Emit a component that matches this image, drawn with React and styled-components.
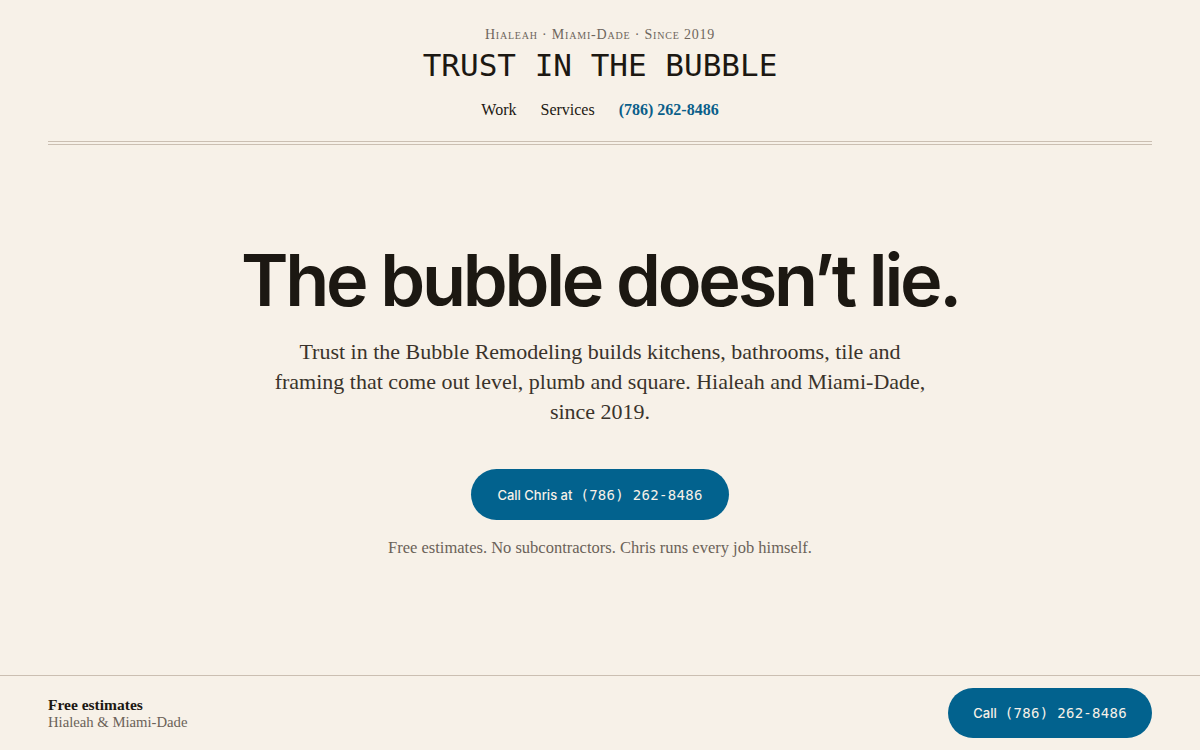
import React from "react";
import styled, { createGlobalStyle } from "styled-components";

const GlobalStyles = createGlobalStyle`
  html, body {
    margin: 0;
    padding: 0;
    background: #f7f1e8;
  }
  #root {
    min-height: 100vh;
  }
`;

const Page = styled.div`
  min-height: 100vh;
  display: flex;
  flex-direction: column;
  background: #f7f1e8;
  color: #1c1812;
  font-family: "Liberation Serif", "Times New Roman", serif;
`;

const Header = styled.header`
  margin: 0 48px;
  padding-top: 26px;
  display: flex;
  flex-direction: column;
  align-items: center;
  border-bottom: 4px double #cbbfb2;
  padding-bottom: 20px;
`;

const Eyebrow = styled.div`
  font-size: 14px;
  font-variant: small-caps;
  letter-spacing: 0.8px;
  color: #6e665c;
  line-height: 18px;
`;

const Brand = styled.div`
  font-family: "DejaVu Sans Mono", "Liberation Mono", monospace;
  font-size: 31px;
  font-weight: 500;
  line-height: 38px;
  margin-top: 2px;
  color: #1c1812;
`;

const Nav = styled.nav`
  display: flex;
  gap: 24px;
  margin-top: 15px;
  font-size: 16px;
  line-height: 22px;
`;

const NavLink = styled.a`
  color: ${(p) => (p.$accent ? "#0b5f8a" : "#1c1812")};
  font-weight: ${(p) => (p.$accent ? 700 : 400)};
  text-decoration: none;
`;

const Hero = styled.main`
  flex: 1;
  display: flex;
  flex-direction: column;
  align-items: center;
  padding-top: 93px;
  text-align: center;
`;

const Headline = styled.h1`
  margin: 0;
  font-family: Inter, "Liberation Sans", sans-serif;
  font-weight: 600;
  font-size: 72px;
  letter-spacing: -0.045em;
  line-height: 84px;
  color: #1c1812;
`;

const Lead = styled.p`
  margin: 15px 0 0;
  max-width: 668px;
  font-size: 22px;
  line-height: 30px;
  color: #3a332b;
`;

const CallButton = styled.a`
  display: inline-flex;
  align-items: center;
  justify-content: center;
  gap: 8px;
  height: ${(p) => p.$h || 51}px;
  padding: 0 ${(p) => p.$px || 26}px;
  border-radius: 999px;
  background: #02628e;
  color: #f7f1e8;
  text-decoration: none;
  font-family: Inter, "Liberation Sans", sans-serif;
  font-weight: 500;
  font-size: 13px;
  box-sizing: border-box;
`;

const Mono = styled.span`
  font-family: "DejaVu Sans Mono", "Liberation Mono", monospace;
  font-size: 14px;
  font-weight: 500;
  letter-spacing: 0.3px;
`;

const HeroButton = styled(CallButton)`
  margin-top: 42px;
`;

const Note = styled.p`
  margin: 18px 0 0;
  font-size: 16.5px;
  color: #6b6258;
`;

const Footer = styled.footer`
  border-top: 1px solid #cbbfb2;
  height: 74px;
  padding: 0 48px;
  display: flex;
  align-items: center;
  justify-content: space-between;
`;

const FooterText = styled.div`
  display: flex;
  flex-direction: column;
`;

const FooterTitle = styled.div`
  font-size: 15.5px;
  font-weight: 700;
  line-height: 18px;
`;

const FooterSub = styled.div`
  font-size: 14.7px;
  line-height: 17px;
  color: #6b6258;
`;

export default function App() {
  return (
    <Page>
      <GlobalStyles />
      <Header>
        <Eyebrow>Hialeah · Miami-Dade · Since 2019</Eyebrow>
        <Brand>TRUST IN THE BUBBLE</Brand>
        <Nav>
          <NavLink href="#work">Work</NavLink>
          <NavLink href="#services">Services</NavLink>
          <NavLink $accent href="tel:7862628486">(786) 262-8486</NavLink>
        </Nav>
      </Header>

      <Hero>
        <Headline>The bubble doesn’t lie.</Headline>
        <Lead>
          Trust in the Bubble Remodeling builds kitchens, bathrooms, tile and
          framing that come out level, plumb and square. Hialeah and
          Miami-Dade, since 2019.
        </Lead>
        <HeroButton href="tel:7862628486">
          Call Chris at <Mono>(786) 262-8486</Mono>
        </HeroButton>
        <Note>Free estimates. No subcontractors. Chris runs every job himself.</Note>
      </Hero>

      <Footer>
        <FooterText>
          <FooterTitle>Free estimates</FooterTitle>
          <FooterSub>Hialeah &amp; Miami-Dade</FooterSub>
        </FooterText>
        <CallButton $h={50} $px={25} href="tel:7862628486">
          Call <Mono>(786) 262-8486</Mono>
        </CallButton>
      </Footer>
    </Page>
  );
}
